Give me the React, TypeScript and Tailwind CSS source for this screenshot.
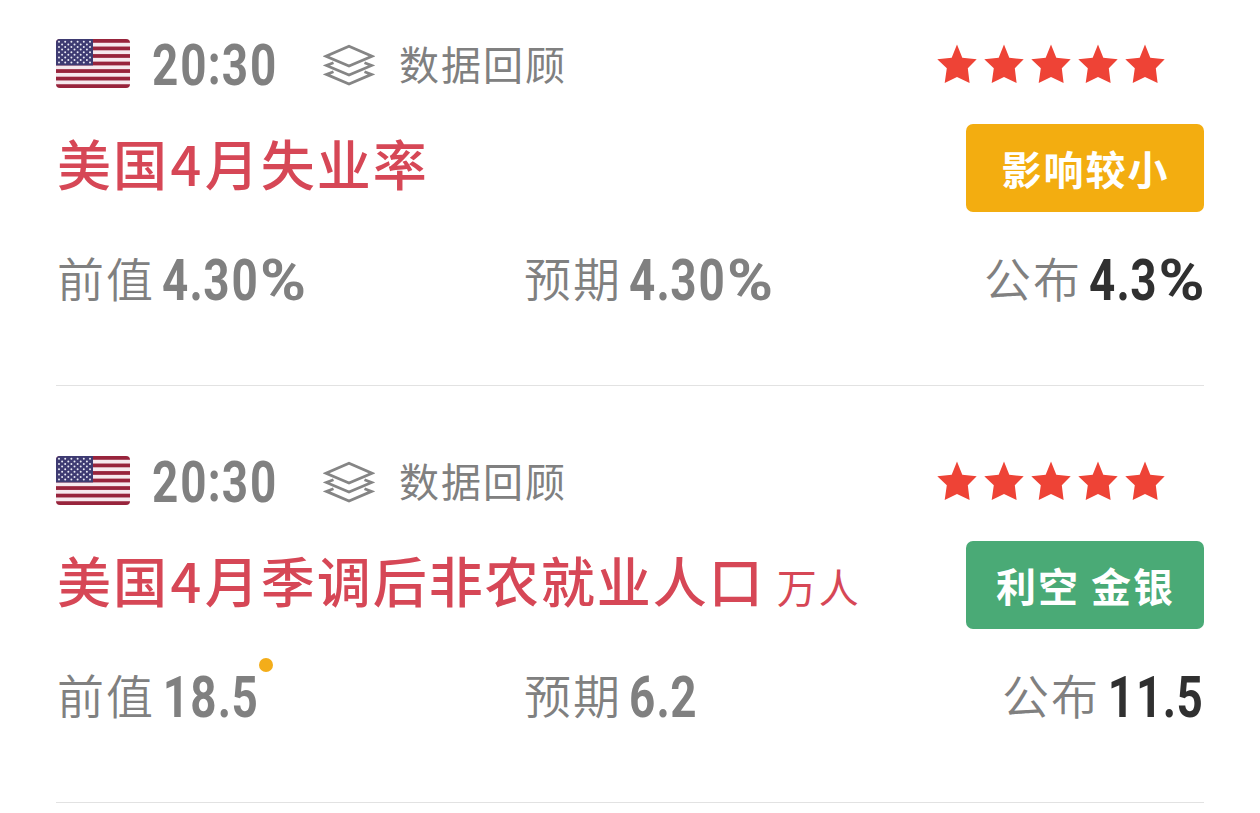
import React from 'react';
import clsx from 'clsx';

interface Figure {
  text: string;
  // Box width of the condensed number, so the flow matches the scaled glyphs
  width: string;
}

interface EventItem {
  id: number;
  time: string;
  title: string;
  unit?: string;
  badge: { text: string; color: string };
  previous: Figure;
  revised?: boolean;
  forecast: Figure;
  actual: Figure;
}

const events: EventItem[] = [
  {
    id: 1,
    time: '20:30',
    title: '美国4月失业率',
    badge: { text: '影响较小', color: 'bg-[#f3ad10]' },
    previous: { text: '4.30%', width: 'w-[144px]' },
    forecast: { text: '4.30%', width: 'w-[144px]' },
    actual: { text: '4.3%', width: 'w-[115px]' },
  },
  {
    id: 2,
    time: '20:30',
    title: '美国4月季调后非农就业人口',
    unit: '万人',
    badge: { text: '利空 金银', color: 'bg-[#4aaa76]' },
    previous: { text: '18.5', width: 'w-[97px]' },
    revised: true,
    forecast: { text: '6.2', width: 'w-[70px]' },
    actual: { text: '11.5', width: 'w-[97px]' },
  },
];

const FlagUS = () => (
  <svg viewBox="0 0 74 49" className="w-[74px] h-[49px] rounded-[4px] shrink-0">
    <rect width="74" height="49" fill="#f6e9ee" />
    {[0, 1, 2, 3, 4, 5, 6].map(i => (
      <rect key={i} y={i * 7.54} width="74" height="3.77" fill="#98243c" />
    ))}
    <rect width="37" height="26.4" fill="#3e3b72" />
    {Array.from({ length: 9 }, (_, row) =>
      Array.from({ length: row % 2 ? 5 : 6 }, (_, col) => (
        <circle
          key={`${row}-${col}`}
          cx={(row % 2 ? 6.1 : 3) + col * 6.2}
          cy={2.8 + row * 2.6}
          r="1"
          fill="#e9e9f4"
        />
      ))
    )}
  </svg>
);

const LayersIcon = () => (
  <svg viewBox="0 0 52 42" className="w-[52px] h-[42px] shrink-0" fill="none" stroke="#858585" strokeWidth="2.8">
    <path d="M26 2.2 49 12.3 26 22 3 12.3Z" />
    <path d="M10.5 18.8 3.4 21.5 26 31 48.6 21.5 41.5 18.8" />
    <path d="M10.5 27.7 3.4 30.4 26 40 48.6 30.4 41.5 27.7" />
  </svg>
);

const Star = () => (
  <svg viewBox="0 0 40 40" className="w-10 h-10" fill="#ee4336">
    <path d="M20 0.5 25.3 13.8 39.7 15.2 30.8 24.2 32.6 39 20 33 7.7 39 9.8 24.2 0.3 15.2 14.7 13.8Z" />
  </svg>
);

const charClass = (char: string) => {
  if (char === '.') return '-ml-px -mr-[2px]';
  if (char === ':') return 'inline-block -mx-[1px] -translate-y-px';
  if (char === '%') return 'inline-block origin-left scale-x-[1.36]';
  if (char === '1') return 'inline-block translate-x-px';
  return undefined;
};

const Num = ({ value, className }: { value: Figure; className?: string }) => (
  <span className={clsx('block whitespace-nowrap', value.width, className)}>
    <span className="block w-max origin-left scale-x-[0.79] font-['Roboto',sans-serif] font-bold text-[58px] leading-[64px] tracking-[2.5px]">
      {value.text.split('').map((char, i) => (
        <span key={i} className={charClass(char)}>{char}</span>
      ))}
    </span>
  </span>
);

const Label = ({ children }: { children: React.ReactNode }) => (
  <span className="pl-px -mt-[3px] text-[47px] leading-[64px] tracking-[2px] font-[350] text-[#808080] whitespace-nowrap">
    {children}
  </span>
);

const EventCard = ({ item }: { item: EventItem }) => (
  <article className="border-b border-[#e2e2e2] pb-[73px]">
    {/* Time, category and importance */}
    <div className="flex items-center h-[49px]">
      <FlagUS />
      <Num value={{ text: item.time, width: 'w-[126px]' }} className="ml-[22px] mt-[2px] text-[#808080]" />
      <div className="ml-[45px] mt-[2px]">
        <LayersIcon />
      </div>
      <span className="ml-6 text-[40px] leading-[49px] tracking-[2px] text-[#808080]">数据回顾</span>
      <div className="ml-auto mr-[39px] flex gap-[7px]">
        {[1, 2, 3, 4, 5].map(n => (
          <Star key={n} />
        ))}
      </div>
    </div>

    {/* Title and impact badge */}
    <div className="mt-9 flex h-[88px] justify-between">
      <h2 className="flex items-baseline pl-px text-[#d64756] leading-[78px] whitespace-nowrap">
        <span className="text-[54px] tracking-[2px] font-medium">
          {item.title.split(/(\d+)/).map((part, i) => (
            <span key={i} className={/\d/.test(part) ? 'mx-[1.5px]' : undefined}>{part}</span>
          ))}
        </span>
        {item.unit && <span className="ml-3 text-[40px] tracking-[2px]">{item.unit}</span>}
      </h2>
      <div
        className={clsx(
          'flex items-center justify-center w-[238px] pl-px rounded-[7px] text-white text-[40px] tracking-[2px] font-bold',
          item.badge.color
        )}
      >
        {item.badge.text}
      </div>
    </div>

    {/* Previous / forecast / actual */}
    <div className="mt-9 flex h-16 items-center">
      <div className="flex w-[467px]">
        <Label>前值</Label>
        <div className="relative ml-[7px]">
          <Num value={item.previous} className="text-[#808080]" />
          {item.revised && (
            <span className="absolute -top-[7px] -right-[14px] w-[14px] h-[14px] rounded-full bg-[#f3ad1a]" />
          )}
        </div>
      </div>
      <div className="flex">
        <Label>预期</Label>
        <Num value={item.forecast} className="ml-[7px] text-[#808080]" />
      </div>
      <div className="ml-auto flex">
        <Label>公布</Label>
        <Num value={item.actual} className="ml-[7px] text-[#303030]" />
      </div>
    </div>
  </article>
);

export default function App() {
  return (
    <main className="w-[1260px] h-[813px] overflow-hidden bg-white px-14 pt-[39px] flex flex-col gap-[70px] font-['Noto_Sans_CJK_SC',sans-serif]">
      {events.map(item => (
        <EventCard key={item.id} item={item} />
      ))}
    </main>
  );
}
